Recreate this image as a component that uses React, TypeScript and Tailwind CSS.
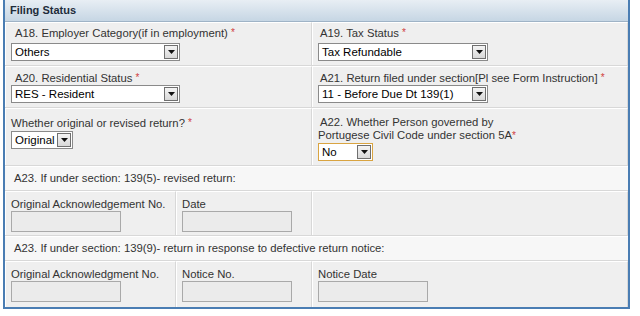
import { ReactNode } from 'react'

const font = { fontFamily: '"Liberation Sans", Arial, sans-serif' }

function Star() {
  return <span className="text-[#d04040] text-[10px] align-top">*</span>
}

function Select({ value, w, focus }: { value: string; w: string; focus?: boolean }) {
  return (
    <div
      className={`${w} h-[18px] flex items-stretch bg-white border ${
        focus ? 'border-[#d9a441]' : 'border-[#8a8a8a]'
      }`}
    >
      <div className="flex-1 pl-[3px] text-[11.5px] leading-[16px] text-black whitespace-nowrap overflow-hidden">{value}</div>
      <div className="w-[14px] m-[1px] border border-[#6f6f6f] bg-gradient-to-b from-[#f4f4f4] to-[#d8d8d8] flex items-center justify-center">
        <svg width="7" height="4" viewBox="0 0 7 4">
          <path d="M0 0h7L3.5 4z" fill="#111" />
        </svg>
      </div>
    </div>
  )
}

function TextBox() {
  return <div className="w-[110px] h-[21px] bg-[#ebebeb] border border-[#a9a9a9]" />
}

function Cell({ children, className = '' }: { children: ReactNode; className?: string }) {
  return (
    <div className={`border-l border-t border-white border-r border-r-[#d8d8d8] ${className}`}>{children}</div>
  )
}

export default function App() {
  return (
    <div className="w-[640px] h-[316px] bg-white text-[#333] text-[11.3px]" style={font}>
      <div className="ml-[3px] w-[627px] h-[309px] border-l-[2px] border-r-[2px] border-b-[2px] border-[#4a7db3] flex flex-col">
        <div className="h-[22px] border-b border-[#9fb3c6] bg-gradient-to-b from-[#e8eef4] to-[#c6d6e4] px-[5px] flex items-center">
          <span className="text-[11px] font-bold text-[#1e2c3a]">Filing Status</span>
        </div>

        <div className="flex-1 bg-[#efefef] flex flex-col">
          {/* row 1 */}
          <div className="h-[44px] flex border-b border-[#d8d8d8]">
            <Cell className="w-[307px] pl-[5px] pt-[3px]">
              <div className="leading-[14px] pl-[4px]">
                A18. Employer Category(if in employment) <Star />
              </div>
              <div className="mt-[3px]">
                <Select value="Others" w="w-[169px]" />
              </div>
            </Cell>
            <Cell className="flex-1 pl-[5px] pt-[3px]">
              <div className="leading-[14px] pl-[2px]">
                A19. Tax Status <Star />
              </div>
              <div className="mt-[3px]">
                <Select value="Tax Refundable" w="w-[170px]" />
              </div>
            </Cell>
          </div>

          {/* row 2 */}
          <div className="h-[42px] flex border-b border-[#d8d8d8]">
            <Cell className="w-[307px] pl-[5px] pt-[4px]">
              <div className="leading-[14px] pl-[4px]">
                A20. Residential Status <Star />
              </div>
              <div>
                <Select value="RES - Resident" w="w-[169px]" />
              </div>
            </Cell>
            <Cell className="flex-1 pl-[5px] pt-[4px]">
              <div className="leading-[14px] pl-[2px]">
                A21. Return filed under section[Pl see Form Instruction] <Star />
              </div>
              <div>
                <Select value="11 - Before Due Dt 139(1)" w="w-[170px]" />
              </div>
            </Cell>
          </div>

          {/* row 3 */}
          <div className="h-[58px] flex border-b border-[#d8d8d8]">
            <Cell className="w-[307px] pl-[5px] pt-[7px]">
              <div className="leading-[14px]">
                Whether original or revised return? <Star />
              </div>
              <div className="mt-[1px]">
                <Select value="Original" w="w-[62px]" />
              </div>
            </Cell>
            <Cell className="flex-1 pl-[5px] pt-[7px]">
              <div className="leading-[13px]">
                <span className="pl-[2px]">A22. Whether Person governed by</span>
                <br />
                Portugese Civil Code under section 5A<Star />
              </div>
              <div className="mt-[1px]">
                <Select value="No" w="w-[55px]" focus />
              </div>
            </Cell>
          </div>

          {/* row 4 */}
          <div className="h-[25px] flex items-center pl-[9px] bg-[#f7f7f7] border-t border-white border-b border-b-[#d8d8d8]">
            A23. If under section: 139(5)- revised return:
          </div>

          {/* row 5 */}
          <div className="h-[45px] flex border-b border-[#d8d8d8]">
            <Cell className="w-[171px] pl-[5px] pt-[5px]">
              <div className="leading-[14px] whitespace-nowrap">Original Acknowledgement No.</div>
              <TextBox />
            </Cell>
            <Cell className="w-[136px] pl-[5px] pt-[5px]">
              <div className="leading-[14px]">Date</div>
              <TextBox />
            </Cell>
            <Cell className="flex-1">{null}</Cell>
          </div>

          {/* row 6 */}
          <div className="h-[25px] flex items-center pl-[9px] bg-[#f7f7f7] border-t border-white border-b border-b-[#d8d8d8]">
            A23. If under section: 139(9)- return in response to defective return notice:
          </div>

          {/* row 7 */}
          <div className="flex-1 flex">
            <Cell className="w-[171px] pl-[5px] pt-[5px]">
              <div className="leading-[14px] whitespace-nowrap">Original Acknowledgment No.</div>
              <TextBox />
            </Cell>
            <Cell className="w-[136px] pl-[5px] pt-[5px]">
              <div className="leading-[14px]">Notice No.</div>
              <TextBox />
            </Cell>
            <Cell className="flex-1 pl-[5px] pt-[5px]">
              <div className="leading-[14px]">Notice Date</div>
              <TextBox />
            </Cell>
          </div>
        </div>
      </div>
    </div>
  )
}
